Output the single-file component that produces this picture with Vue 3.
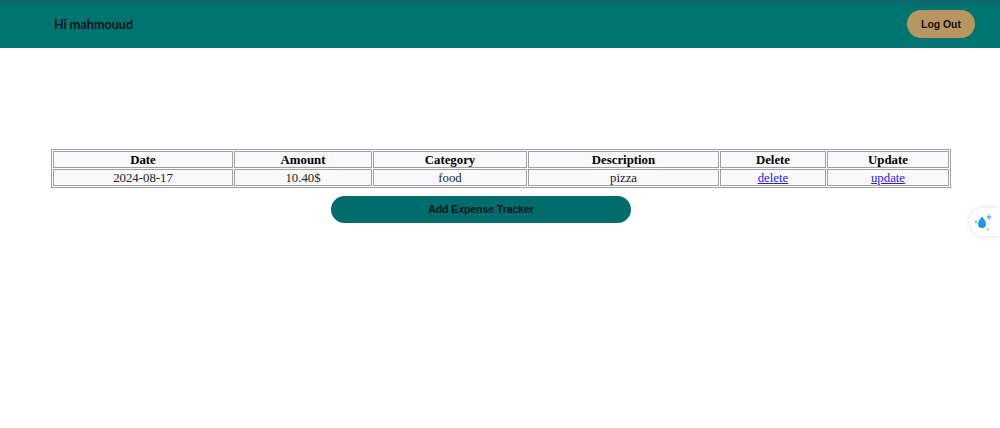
<script setup>
const columns = [
  { label: 'Date', width: '180px' },
  { label: 'Amount', width: '138px' },
  { label: 'Category', width: '154px' },
  { label: 'Description', width: '191px' },
  { label: 'Delete', width: '106px' },
  { label: 'Update', width: '122px' }
]
</script>

<template>
  <div class="page">
    <header class="topbar">
      <span class="greeting">Hi mahmouud</span>
      <button class="logout" type="button">Log Out</button>
    </header>
    <main class="content">
      <table class="expenses">
        <colgroup>
          <col v-for="c in columns" :key="c.label" :style="{ width: c.width }" />
        </colgroup>
        <thead>
          <tr>
            <th v-for="c in columns" :key="c.label">{{ c.label }}</th>
          </tr>
        </thead>
        <tbody>
          <tr>
            <td>2024-08-17</td>
            <td>10.40$</td>
            <td>food</td>
            <td>pizza</td>
            <td><a href="#">delete</a></td>
            <td><a href="#">update</a></td>
          </tr>
        </tbody>
      </table>
      <button class="add" type="button">Add Expense Tracker</button>
    </main>
    <div class="widget" aria-hidden="true">
      <svg width="26" height="24" viewBox="0 0 26 24">
        <path d="M12 6.5C10 9.5 8 11.2 8 14a4 4 0 0 0 8 0C16 11.2 14 9.5 12 6.5Z" fill="#2196e8" />
        <path d="M19 3.5l.8 2.7 2.7.8-2.7.8-.8 2.7-.8-2.7-2.7-.8 2.7-.8Z" fill="#4aa9ee" />
        <path d="M6 10l.6 1.4 1.4.6-1.4.6-.6 1.4-.6-1.4-1.4-.6 1.4-.6Z" fill="#4aa9ee" />
        <circle cx="18" cy="19.5" r="1.2" fill="#9ccff4" />
      </svg>
    </div>
  </div>
</template>

<style scoped>
.page {
  position: relative;
  min-height: 428px;
  background: #fff;
  overflow: hidden;
}
.topbar {
  height: 48px;
  box-sizing: border-box;
  display: flex;
  align-items: center;
  justify-content: space-between;
  padding: 0 25px 0 54px;
  background: linear-gradient(#136468 0, #007470 6px, #007470 100%);
}
.greeting {
  font-family: "Lato", sans-serif;
  font-size: 12.6px;
  font-weight: 700;
  color: #06121c;
}
.logout {
  width: 68px;
  height: 28px;
  border: 0;
  padding: 0;
  border-radius: 14px;
  background: #b8965f;
  color: #111;
  font-family: "Liberation Sans", sans-serif;
  font-size: 10.4px;
  font-weight: 700;
}
.content {
  padding: 101px 49px 0 51px;
}
.expenses {
  width: 900px;
  table-layout: fixed;
  border-collapse: separate;
  border-spacing: 1px;
  border: 1px solid #a0a0a0;
  font-family: "Liberation Serif", serif;
  font-size: 12.8px;
  color: #222;
  box-sizing: border-box;
}
.expenses th,
.expenses td {
  border: 1px solid #a0a0a0;
  padding: 1px 1px 0;
  height: 14px;
  line-height: 14px;
  text-align: center;
  background: #f9f8fa;
}
.expenses th {
  font-weight: 700;
  color: #000;
}
.expenses a {
  color: #1f1fe6;
}
.add {
  display: block;
  width: 300px;
  height: 27px;
  margin: 8px 0 0 280px;
  border: 0;
  padding: 0;
  border-radius: 14px;
  background: #006c6b;
  color: #06121c;
  font-family: "Liberation Sans", sans-serif;
  font-size: 10.4px;
  font-weight: 700;
}
.widget {
  position: absolute;
  top: 208px;
  right: 0;
  width: 30px;
  height: 28px;
  display: flex;
  align-items: center;
  box-sizing: border-box;
  background: #fff;
  border-radius: 14px 0 0 14px;
  box-shadow: 0 0 6px rgba(0, 0, 0, 0.12);
}
</style>
